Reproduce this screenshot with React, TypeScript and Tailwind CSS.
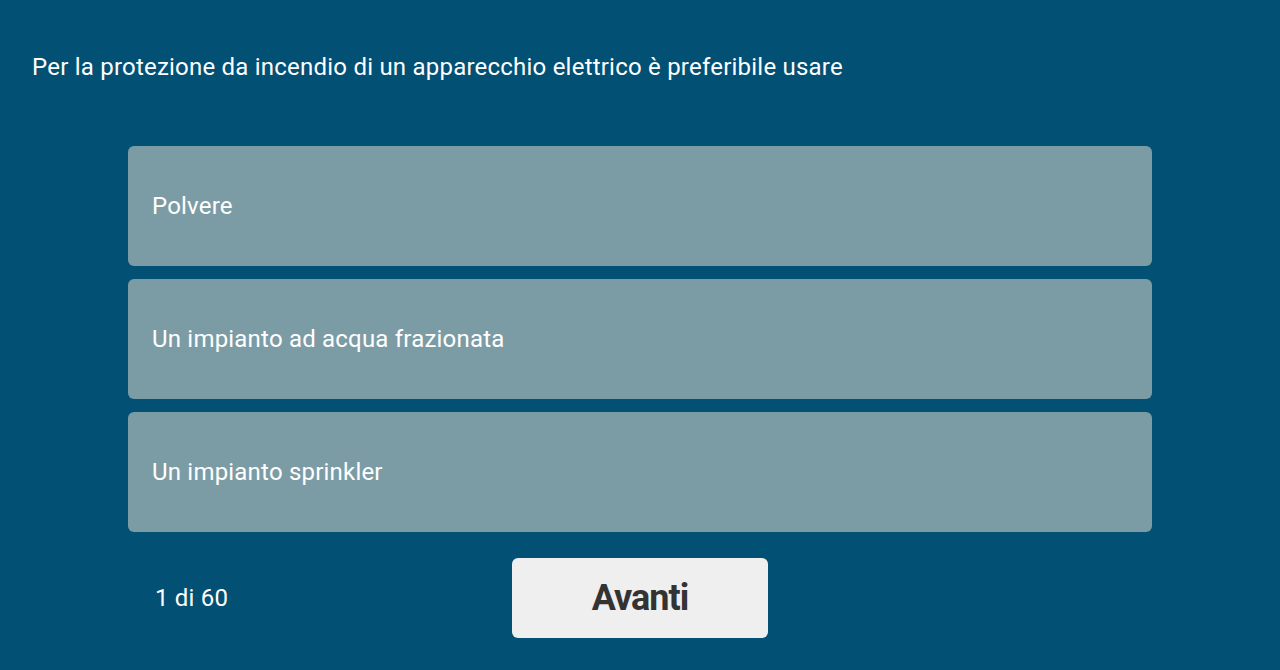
import React from 'react';

const options = ['Polvere', 'Un impianto ad acqua frazionata', 'Un impianto sprinkler'];

export default function App() {
  return (
    <div
      className="w-[1280px] h-[670px] bg-[#025074] text-white overflow-hidden"
      style={{ fontFamily: 'Roboto, "Liberation Sans", sans-serif' }}
    >
      {/* Question */}
      <div className="pt-[53px] px-8 text-[24px] leading-[28px] tracking-[0.22px]">
        Per la protezione da incendio di un apparecchio elettrico è preferibile usare
      </div>

      {/* Answers */}
      <div className="mt-[65px] mx-[128px] flex flex-col gap-[13px]">
        {options.map((opt) => (
          <div
            key={opt}
            className="h-[120px] rounded-[6px] bg-[#7c9ca5] flex items-center px-6 text-[24px] tracking-[0.2px]"
          >
            {opt}
          </div>
        ))}
      </div>

      {/* Footer */}
      <div className="relative mt-[26px] mx-[128px] h-[80px] flex items-center justify-center">
        <span className="absolute left-[27px] text-[24px] tracking-[0.2px]">1 di 60</span>
        <button className="w-[256px] h-[80px] rounded-[6px] bg-[#efefef] text-[#333333] text-[36px] font-bold tracking-[-1px]">
          Avanti
        </button>
      </div>
    </div>
  );
}
